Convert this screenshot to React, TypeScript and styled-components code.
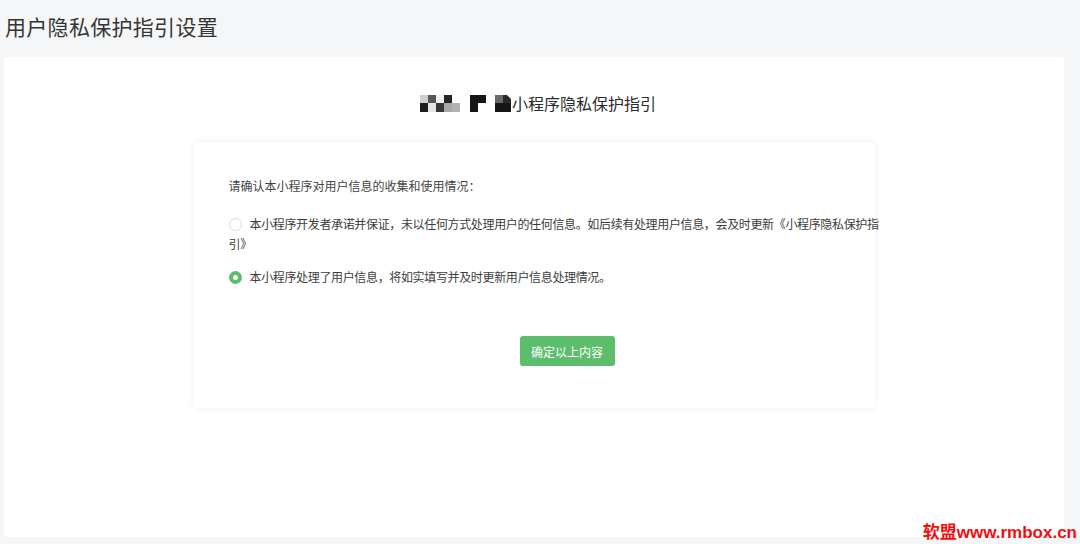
import React, { useState } from 'react';
import styled, { createGlobalStyle } from 'styled-components';

const GlobalStyle = createGlobalStyle`
  html, body { margin: 0; padding: 0; }
  body {
    background: #f5f6f8;
    font-family: 'Noto Sans CJK SC', 'Noto Sans', sans-serif;
    color: #333;
  }
`;

const Page = styled.div`
  position: relative;
  width: 1080px;
  height: 544px;
  display: flex;
  flex-direction: column;
  padding: 0 16px 7px 4px;
  box-sizing: border-box;
`;

const PageTitle = styled.h1`
  margin: 0;
  height: 57px;
  display: flex;
  align-items: center;
  padding: 0 0 5px 1px;
  box-sizing: border-box;
  font-size: 21px;
  font-weight: 400;
  letter-spacing: 0.3px;
  color: #353535;
`;

const Panel = styled.section`
  flex: 1;
  background: #fff;
  border-radius: 4px;
  display: flex;
  flex-direction: column;
  align-items: center;
  padding-top: 34px;
`;

const Heading = styled.h2`
  margin: 0 0 27px 8px;
  height: 24px;
  display: flex;
  align-items: center;
  font-size: 16px;
  font-weight: 400;
  color: #2b2b2b;
`;

const Card = styled.div`
  width: 681px;
  box-sizing: border-box;
  padding: 34px 0 42px 35px;
  border-radius: 3px;
  box-shadow: 0 0 6px rgba(0, 0, 0, 0.07);
`;

const Content = styled.div`
  width: 677px;
  display: flex;
  flex-direction: column;
`;

const Prompt = styled.p`
  margin: 0 0 18px;
  font-size: 12px;
  line-height: 20px;
  color: #444;
`;

const Options = styled.div`
  display: flex;
  flex-direction: column;
  gap: 13px;
`;

const Option = styled.label`
  display: block;
  width: 652px;
  font-size: 12px;
  line-height: 20px;
  letter-spacing: -0.35px;
  line-break: anywhere;
  color: #3c3c3c;
  cursor: pointer;
`;

const Radio = styled.span<{ $checked: boolean }>`
  display: inline-block;
  box-sizing: border-box;
  width: 13px;
  height: 13px;
  margin-right: 8px;
  vertical-align: -2px;
  border-radius: 50%;
  border: ${p => (p.$checked ? '4.5px solid #5cbd6d' : '1px solid #dcdcdc')};
  background: #fff;
`;

const ButtonRow = styled.div`
  display: flex;
  justify-content: center;
  margin-top: 49px;
`;

const ConfirmButton = styled.button`
  width: 95px;
  height: 30px;
  border: none;
  border-radius: 3px;
  background: #5cbd6d;
  color: #fff;
  font-family: inherit;
  font-size: 12px;
  cursor: pointer;
`;

const Watermark = styled.div`
  position: absolute;
  right: 3px;
  bottom: 1px;
  font-family: 'Liberation Sans', 'Noto Sans CJK SC', sans-serif;
  font-size: 17px;
  font-weight: 700;
  color: #f30d0d;
  line-height: 20px;
`;

// blurred (pixelated) app name in front of the heading
const Mosaic: React.FC = () => {
  const cells: [number, number, number, number, string][] = [
    [0, 0, 8, 8, '#cfcfcf'], [8, 0, 8, 8, '#575757'], [16, 0, 8, 8, '#f2f2f2'], [24, 0, 8, 8, '#232323'],
    [0, 8, 8, 9, '#1d1d1d'], [8, 8, 8, 9, '#e6e6e6'], [16, 8, 8, 9, '#373737'], [24, 8, 8, 9, '#a8a8a8'], [32, 8, 8, 9, '#b2b2b2'],
    [50, 0, 16, 8, '#151515'], [50, 8, 8, 9, '#151515'],
    [75, 0, 8, 8, '#6a6a6a'], [75, 8, 16, 9, '#161616'],
  ];
  return (
    <svg width="92" height="17" viewBox="0 0 92 17">
      {cells.map(([x, y, w, h, c], i) => <rect key={i} x={x} y={y} width={w} height={h} fill={c} />)}
      <polygon points="83,0 87,0 91,4 91,8 83,8" fill="#2a2a2a" />
    </svg>
  );
};

export default function App() {
  const [choice, setChoice] = useState(1);
  const options = [
    '本小程序开发者承诺并保证，未以任何方式处理用户的任何信息。如后续有处理用户信息，会及时更新《小程序隐私保护指引》',
    '本小程序处理了用户信息，将如实填写并及时更新用户信息处理情况。',
  ];

  return (
    <>
      <GlobalStyle />
      <Page>
        <PageTitle>用户隐私保护指引设置</PageTitle>
        <Panel>
          <Heading><Mosaic />小程序隐私保护指引</Heading>
          <Card>
            <Content>
              <Prompt>请确认本小程序对用户信息的收集和使用情况：</Prompt>
              <Options>
                {options.map((text, i) => (
                  <Option key={i} onClick={() => setChoice(i)}>
                    <Radio $checked={choice === i} />{text}
                  </Option>
                ))}
              </Options>
              <ButtonRow>
                <ConfirmButton>确定以上内容</ConfirmButton>
              </ButtonRow>
            </Content>
          </Card>
        </Panel>
        <Watermark>软盟www.rmbox.cn</Watermark>
      </Page>
    </>
  );
}
